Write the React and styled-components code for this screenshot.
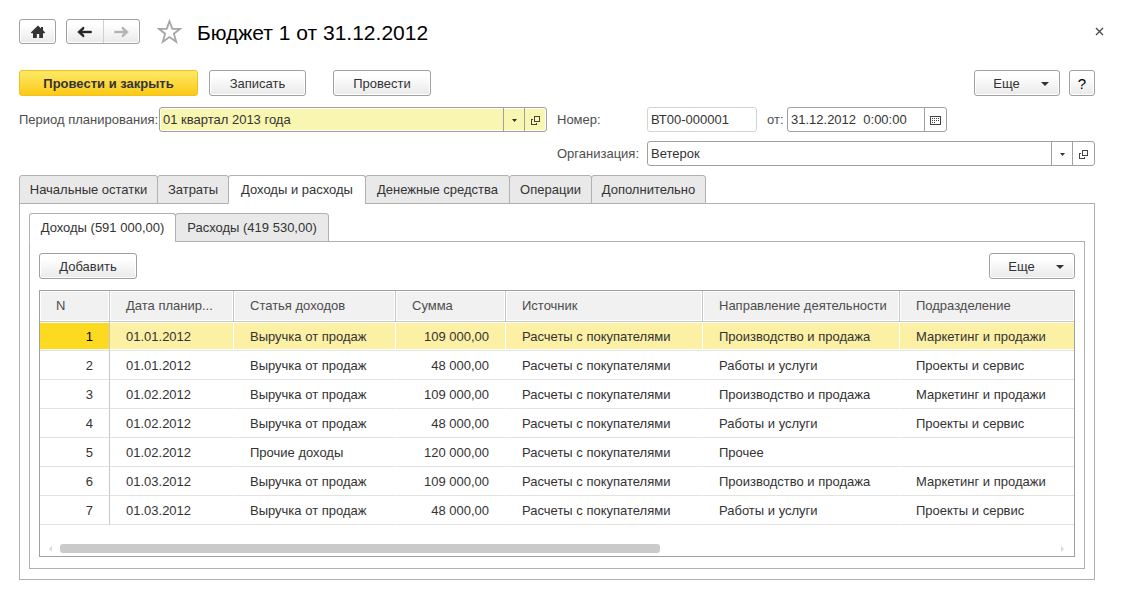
import React from "react";
import styled, { createGlobalStyle, css } from "styled-components";

const GlobalStyle = createGlobalStyle`
  *, *::before, *::after { box-sizing: border-box; }
  body {
    margin: 0;
    background: #fff;
    color: #333;
    font: 13px/16px "Liberation Sans", Arial, sans-serif;
  }
  button, input { font: inherit; color: inherit; margin: 0; }
`;

const Page = styled.main`
  padding: 19px 26px 14px 19px;
`;

const Header = styled.header`
  display: flex;
  align-items: center;
  height: 25px;
`;

const raised = css`
  border: 1px solid #a0a0a0;
  border-radius: 3px;
  background: linear-gradient(#fff 20%, #e9e9e9);
  box-shadow: inset 0 0 0 1px #fff;
`;

const HomeButton = styled.button`
  ${raised}
  display: flex;
  align-items: center;
  justify-content: center;
  width: 37px;
  height: 25px;
  padding: 0;
`;

const NavGroup = styled.nav`
  ${raised}
  display: flex;
  width: 74px;
  height: 25px;
  margin-left: 10px;
`;

const NavButton = styled.button`
  display: flex;
  flex: 1;
  align-items: center;
  justify-content: center;
  padding: 0;
  border: 0;
  background: none;
  color: ${(p) => (p.disabled ? "#b3b3b3" : "#262626")};

  & + & { border-left: 1px solid #d0d0d0; }
`;

const StarButton = styled.button`
  display: flex;
  margin-left: 17px;
  padding: 0;
  border: 0;
  background: none;
`;

const Title = styled.h1`
  flex: 1;
  margin: 0 0 0 15px;
  padding-top: 3px;
  color: #000;
  font-size: 21px;
  font-weight: 400;
  line-height: 24px;
`;

const CloseButton = styled.button`
  display: flex;
  margin-right: -9px;
  padding: 0;
  border: 0;
  background: none;
`;

const CommandBar = styled.div`
  display: flex;
  height: 26px;
  margin-top: ${(p) => p.$top || 0}px;
`;

const Spacer = styled.span`
  flex: ${(p) => (p.$width ? `0 0 ${p.$width}px` : 1)};
`;

const Button = styled.button`
  ${raised}
  display: inline-flex;
  align-items: center;
  justify-content: center;
  gap: 21px;
  height: 26px;
  min-width: ${(p) => p.$width || 98}px;
  padding: 1px 0 0;
  ${(p) =>
    p.$primary &&
    css`
      border-color: #f4c01e;
      background: linear-gradient(#ffe968, #fbca17);
      box-shadow: none;
      font-weight: 700;
    `}
  ${(p) => p.$menu && "padding-left: 8px;"}
`;

const HelpButton = styled(Button)`
  color: #000;
  font-size: 15px;
`;

const Form = styled.form`
  display: grid;
  grid-template-columns: 528fr 538fr;
  gap: 9px 10px;
  margin-top: 11px;
`;

const FormRow = styled.div`
  display: flex;
  align-items: center;
  height: 25px;
  ${(p) => p.$second && "grid-column: 2;"}
`;

const Label = styled.label`
  flex: none;
  width: ${(p) => p.$width}px;
  color: #4d4d4d;
  white-space: nowrap;
`;

const Field = styled.div`
  display: flex;
  flex: ${(p) => (p.$width ? `0 0 ${p.$width}px` : 1)};
  min-width: 0;
  height: 25px;
  overflow: hidden;
  border: 1px solid ${(p) => (p.$quiet ? "#d4d4d4" : "#a0a0a0")};
  border-radius: 3px;
  background: ${(p) => (p.$marked ? "#f8f6b0" : "#fff")};
  box-shadow: inset 0 0 0 1px #fff;
`;

const TextInput = styled.input`
  flex: 1;
  width: 0;
  min-width: 0;
  padding: 0 3px;
  border: 0;
  outline: 0;
  background: none;
`;

const FieldButton = styled.button`
  display: flex;
  flex: 0 0 ${(p) => p.$width || 21}px;
  align-items: center;
  justify-content: center;
  padding: 2px 0 0;
  border: 0;
  border-left: 1px solid #a0a0a0;
  background: none;
`;

const TabList = styled.div`
  display: flex;
  position: relative;
  z-index: 1;
  margin-bottom: -1px;
`;

const Tab = styled.button`
  height: 29px;
  min-width: ${(p) => p.$width}px;
  padding: 0 8px;
  border: 1px solid #b0b0b0;
  border-radius: 3px 3px 0 0;
  background: #e9e9e9;
  white-space: nowrap;

  & + & { margin-left: -1px; }

  &[aria-selected="true"] {
    border-bottom-color: #fff;
    background: #fff;
  }
`;

const OuterTabs = styled.section`
  margin-top: 9px;
`;

const OuterPanel = styled.div`
  padding: 9px 9px 10px;
  border: 1px solid #b0b0b0;
`;

const InnerPanel = styled.div`
  padding: 11px 9px;
  border: 1px solid #b0b0b0;
`;

const Grid = styled.div`
  margin-top: 11px;
  overflow: hidden;
  border: 1px solid #a0a0a0;
`;

const Table = styled.table`
  width: 100%;
  border-spacing: 0;
  table-layout: fixed;
`;

const HeadCell = styled.th`
  width: ${(p) => (p.$width ? `${p.$width}px` : "auto")};
  height: 31px;
  padding: 0 8px 1px 16px;
  overflow: hidden;
  border-right: 1px solid #c8c8c8;
  border-bottom: 1px solid #c8c8c8;
  background: #f1f1f1;
  box-shadow: inset 0 0 0 1px #fff;
  color: #4d4d4d;
  font-weight: 400;
  text-align: left;
  text-overflow: ellipsis;
  white-space: nowrap;

  &:last-child { border-right: 0; }
`;

const Cell = styled.td`
  height: 29px;
  padding: 2px 16px 0;
  overflow: hidden;
  border-right: 1px solid #fff;
  border-bottom: 1px solid #e2e2e2;
  text-align: ${(p) => (p.$right ? "right" : "left")};
  text-overflow: ellipsis;
  white-space: nowrap;

  &:first-child { border-right-color: #c8c8c8; }
  &:last-child { border-right: 0; }
`;

const Row = styled.tr`
  ${(p) =>
    p.$selected &&
    css`
      ${Cell} {
        background: #fcf0a4;
        box-shadow: inset 0 1px #fff, inset 0 -1px #fff;
      }
      ${Cell}:first-child {
        background: #fbda20;
        color: #000;
      }
    `}
`;

const ScrollBar = styled.div`
  display: flex;
  align-items: center;
  gap: 8px;
  padding: 19px 10px 3px 9px;
`;

const Track = styled.div`
  flex: 1;
  height: 9px;
`;

const Thumb = styled.div`
  width: 60.4%;
  height: 9px;
  border-radius: 3px;
  background: #cacaca;
`;

const HomeIcon = () => (
  <svg width="16" height="14" viewBox="0 0 16 14" aria-hidden="true">
    <path d="M8 .6.8 7.400l.7.8H3V13h3.800V9h2.400v4H13V8.200h1.500l.7-.8L13 5.300V2h-2v1.400z" fill="#333" />
  </svg>
);

const ArrowIcon = ({ forward }) => (
  <svg width="15" height="12" viewBox="0 0 15 12" aria-hidden="true">
    <path
      d={
        forward
          ? "M14.500 6 9 1H8v2l2 2H.5v2H10L8 9v2h1z"
          : "M.5 6 6 1h1v2L5 5h9.500v2H5l2 2v2H6z"
      }
      fill="currentColor"
      stroke="currentColor"
      strokeWidth=".4"
    />
  </svg>
);

const StarIcon = () => (
  <svg width="25" height="25" viewBox="0 0 25 25" aria-hidden="true">
    <path
      d="M12.500 2.200 15.300 9.800H23.200L16.900 14.700 19.200 22.700 12.500 18 5.800 22.700 8.100 14.700 1.800 9.800H9.700z"
      fill="#fff"
      stroke="#a6a6a6"
      strokeWidth="1.800"
    />
  </svg>
);

const CloseIcon = () => (
  <svg width="9" height="9" viewBox="0 0 9 9" aria-hidden="true">
    <path d="M1 1l7 7M8 1 1 8" stroke="#4d4d4d" strokeWidth="1.400" />
  </svg>
);

const Caret = ({ small }) => (
  <svg width={small ? 5 : 8} height={small ? 3 : 4} viewBox="0 0 8 4" preserveAspectRatio="none" aria-hidden="true">
    <path d="M0 0h8L4 4z" fill="#333" />
  </svg>
);

const OpenIcon = () => (
  <svg width="9" height="9" viewBox="0 0 9 9" shapeRendering="crispEdges" aria-hidden="true">
    <path d="M3 0h6v6H3zM4 1v4h4V1zM0 3h2v1H1v4h4V7h1v2H0z" fill="#444" fillRule="evenodd" />
  </svg>
);

const CalendarIcon = () => (
  <svg width="11" height="9" viewBox="0 0 11 9" shapeRendering="crispEdges" aria-hidden="true">
    <path d="M0 0h11v9H0zM1 1v7h9V1z" fill="#444" fillRule="evenodd" />
    <path
      d="M2 2h1v1H2zM4 2h1v1H4zM6 2h1v1H6zM8 2h1v1H8zM2 4h1v1H2zM4 4h1v1H4zM6 4h1v1H6zM8 4h1v1H8zM2 6h1v1H2zM4 6h1v1H4z"
      fill="#444"
    />
  </svg>
);

const ScrollArrow = ({ right }) => (
  <svg width="3" height="6" viewBox="0 0 3 6" aria-hidden="true">
    <path d={right ? "M0 0v6l3-3z" : "M3 0v6L0 3z"} fill="#d8d8d8" />
  </svg>
);

const sections = [
  ["Начальные остатки", 139],
  ["Затраты", 72],
  ["Доходы и расходы", 138],
  ["Денежные средства", 145],
  ["Операции", 83],
  ["Дополнительно", 115],
];

const ledgers = [
  ["Доходы (591 000,00)", 147],
  ["Расходы (419 530,00)", 154],
];

const columns = [
  ["N", 70],
  ["Дата планир...", 124],
  ["Статья доходов", 162],
  ["Сумма", 110],
  ["Источник", 197],
  ["Направление деятельности", 197],
  ["Подразделение"],
];

const SALES = "Выручка от продаж";
const BUYERS = "Расчеты с покупателями";
const PRODUCTION = ["Производство и продажа", "Маркетинг и продажи"];
const SERVICES = ["Работы и услуги", "Проекты и сервис"];

const rows = [
  ["01.01.2012", SALES, "109 000,00", BUYERS, ...PRODUCTION],
  ["01.01.2012", SALES, "48 000,00", BUYERS, ...SERVICES],
  ["01.02.2012", SALES, "109 000,00", BUYERS, ...PRODUCTION],
  ["01.02.2012", SALES, "48 000,00", BUYERS, ...SERVICES],
  ["01.02.2012", "Прочие доходы", "120 000,00", BUYERS, "Прочее", ""],
  ["01.03.2012", SALES, "109 000,00", BUYERS, ...PRODUCTION],
  ["01.03.2012", SALES, "48 000,00", BUYERS, ...SERVICES],
];

const Tabs = ({ items, selected }) => (
  <TabList role="tablist">
    {items.map(([name, width], i) => (
      <Tab key={name} type="button" role="tab" aria-selected={i === selected} $width={width}>
        {name}
      </Tab>
    ))}
  </TabList>
);

const MoreButton = () => (
  <Button type="button" $width={86} $menu>
    Еще
    <Caret />
  </Button>
);

const ChoiceButtons = () => (
  <>
    <FieldButton type="button" aria-label="Выбрать"><Caret small /></FieldButton>
    <FieldButton type="button" aria-label="Открыть" $width={22}><OpenIcon /></FieldButton>
  </>
);

export default function App() {
  return (
    <Page>
      <GlobalStyle />
      <Header>
        <HomeButton type="button" aria-label="Начальная страница"><HomeIcon /></HomeButton>
        <NavGroup>
          <NavButton type="button" aria-label="Назад"><ArrowIcon /></NavButton>
          <NavButton type="button" aria-label="Вперед" disabled><ArrowIcon forward /></NavButton>
        </NavGroup>
        <StarButton type="button" aria-label="В избранное"><StarIcon /></StarButton>
        <Title>Бюджет 1 от 31.12.2012</Title>
        <CloseButton type="button" aria-label="Закрыть"><CloseIcon /></CloseButton>
      </Header>

      <CommandBar $top={26}>
        <Button type="button" $width={179} $primary>Провести и закрыть</Button>
        <Spacer $width={11} />
        <Button type="button" $width={97}>Записать</Button>
        <Spacer $width={27} />
        <Button type="button">Провести</Button>
        <Spacer />
        <MoreButton />
        <Spacer $width={9} />
        <HelpButton type="button" $width={26}>?</HelpButton>
      </CommandBar>

      <Form>
        <FormRow>
          <Label htmlFor="period" $width={140}>Период планирования:</Label>
          <Field $marked>
            <TextInput id="period" defaultValue="01 квартал 2013 года" />
            <ChoiceButtons />
          </Field>
        </FormRow>
        <FormRow>
          <Label htmlFor="number" $width={90}>Номер:</Label>
          <Field $width={110} $quiet>
            <TextInput id="number" defaultValue="ВТ00-000001" />
          </Field>
          <Spacer $width={10} />
          <Label htmlFor="date" $width={20}>от:</Label>
          <Field $width={160}>
            <TextInput id="date" defaultValue="31.12.2012  0:00:00" />
            <FieldButton type="button" aria-label="Календарь" $width={22}><CalendarIcon /></FieldButton>
          </Field>
        </FormRow>
        <FormRow $second>
          <Label htmlFor="organization" $width={90}>Организация:</Label>
          <Field>
            <TextInput id="organization" defaultValue="Ветерок" />
            <ChoiceButtons />
          </Field>
        </FormRow>
      </Form>

      <OuterTabs>
        <Tabs items={sections} selected={2} />
        <OuterPanel role="tabpanel">
          <Tabs items={ledgers} selected={0} />
          <InnerPanel role="tabpanel">
            <CommandBar>
              <Button type="button">Добавить</Button>
              <Spacer />
              <MoreButton />
            </CommandBar>
            <Grid>
              <Table>
                <thead>
                  <tr>
                    {columns.map(([name, width]) => (
                      <HeadCell key={name} scope="col" $width={width}>{name}</HeadCell>
                    ))}
                  </tr>
                </thead>
                <tbody>
                  {rows.map((row, i) => (
                    <Row key={i} $selected={i === 0}>
                      <Cell $right>{i + 1}</Cell>
                      {row.map((value, j) => (
                        <Cell key={j} $right={j === 2}>{value}</Cell>
                      ))}
                    </Row>
                  ))}
                </tbody>
              </Table>
              <ScrollBar>
                <ScrollArrow />
                <Track><Thumb /></Track>
                <ScrollArrow right />
              </ScrollBar>
            </Grid>
          </InnerPanel>
        </OuterPanel>
      </OuterTabs>
    </Page>
  );
}
